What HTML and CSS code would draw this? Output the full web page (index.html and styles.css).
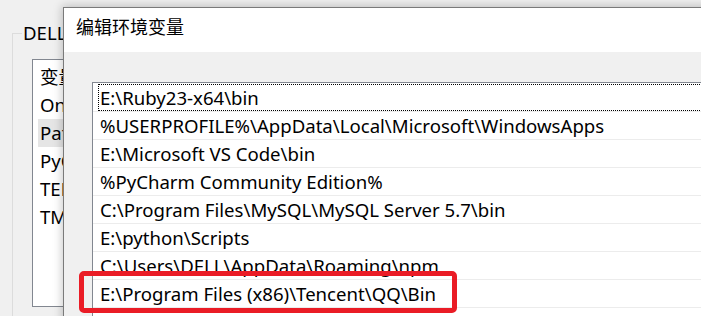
FILE: index.html
```html
<!DOCTYPE html>
<html lang="zh-CN">
<head>
<meta charset="utf-8">
<title>编辑环境变量</title>
<link rel="stylesheet" href="styles.css">
</head>
<body>
<div class="desktop">
  <div class="back-window">
    <div class="group">
      <div class="group-title">DELL 的用户变量(U)</div>
      <div class="back-list">
        <div class="back-row">变量</div>
        <div class="back-row">OneDrive</div>
        <div class="back-row selected">Path</div>
        <div class="back-row">PyCharm</div>
        <div class="back-row">TEMP</div>
        <div class="back-row">TMP</div>
      </div>
    </div>
  </div>

  <div class="dialog">
    <div class="dialog-title">编辑环境变量</div>
    <div class="dialog-body">
      <div class="path-list">
        <div class="path-row"><span class="cell focused">E:\Ruby23-x64\bin</span></div>
        <div class="path-row"><span class="cell">%USERPROFILE%\AppData\Local\Microsoft\WindowsApps</span></div>
        <div class="path-row"><span class="cell">E:\Microsoft VS Code\bin</span></div>
        <div class="path-row"><span class="cell">%PyCharm Community Edition%</span></div>
        <div class="path-row"><span class="cell">C:\Program Files\MySQL\MySQL Server 5.7\bin</span></div>
        <div class="path-row"><span class="cell">E:\python\Scripts</span></div>
        <div class="path-row"><span class="cell">C:\Users\DELL\AppData\Roaming\npm</span></div>
        <div class="path-row"><span class="cell">E:\Program Files (x86)\Tencent\QQ\Bin</span></div>
        <div class="path-row"><span class="cell"></span></div>
      </div>
    </div>
  </div>

  <div class="highlight"></div>
</div>
</body>
</html>
```

FILE: styles.css
```css
html, body {
  margin: 0;
  padding: 0;
}
body {
  width: 701px;
  height: 316px;
  overflow: hidden;
  background: #f0f0f0;
  font-family: "Noto Sans", "Noto Sans CJK SC", sans-serif;
  font-size: 18.6px;
  color: #000;
}
.desktop {
  position: relative;
  width: 701px;
  height: 316px;
  overflow: hidden;
}
.back-window {
  padding: 33px 0 0 12px;
}
.group {
  width: 51px;
  height: 320px;
  border-left: 1px solid #dcdcdc;
  border-top: 1px solid #dcdcdc;
}
.group-title {
  width: 41px;
  margin: -12px 0 0 9px;
  padding-left: 1px;
  background: #f0f0f0;
  line-height: 22px;
  white-space: nowrap;
  overflow: hidden;
}
.back-list {
  margin: 15px 0 0 19px;
  width: 32px;
  height: 248px;
  box-sizing: border-box;
  border: 1px solid #828790;
  border-right: none;
  background: #fff;
  padding-top: 3px;
  overflow: hidden;
}
.back-row {
  height: 28px;
  line-height: 28px;
  margin-left: 5px;
  padding-left: 2px;
  white-space: nowrap;
  overflow: hidden;
}
.back-row.selected {
  background: #e5e5e5;
}
.dialog {
  position: absolute;
  left: 63px;
  top: 7px;
  width: 720px;
  height: 400px;
  border: 1px solid #7a7a7a;
  background: #f0f0f0;
  box-shadow: 0 0 9px 1px rgba(0, 0, 0, 0.22);
}
.dialog-title {
  height: 44px;
  box-sizing: border-box;
  background: #fff;
  padding: 7px 0 0 12px;
  line-height: 24px;
  font-size: 18px;
  white-space: nowrap;
}
.dialog-body {
  padding: 30px 0 0 28px;
}
.path-list {
  border: 1px solid #828790;
  border-right: none;
  background: #fff;
  padding-top: 1px;
  height: 300px;
}
.path-row {
  display: flex;
  height: 27px;
  border-bottom: 1px solid #ececec;
}
.cell {
  flex: 1;
  margin-left: 5px;
  padding: 1px 0 0 2px;
  line-height: 26px;
  white-space: nowrap;
}
.cell.focused {
  outline: 1px dotted #000;
  outline-offset: -1px;
}
.highlight {
  position: absolute;
  left: 79px;
  top: 271px;
  width: 378px;
  height: 42px;
  box-sizing: border-box;
  border: 5px solid #ea1c26;
  border-radius: 5px;
}
```
